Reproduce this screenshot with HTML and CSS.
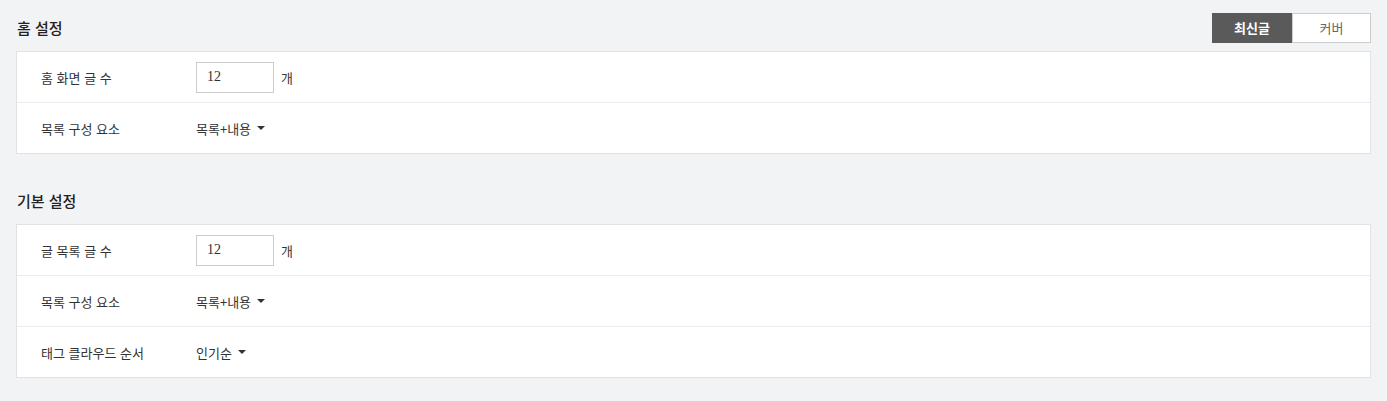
FILE: index.html
```html
<!DOCTYPE html>
<html lang="ko">
<head>
<meta charset="utf-8">
<link rel="stylesheet" href="styles.css">
</head>
<body>
<section class="section">
  <div class="section-head">
    <h2 class="section-title">홈 설정</h2>
    <div class="toggle">
      <button class="toggle-btn active">최신글</button>
      <button class="toggle-btn">커버</button>
    </div>
  </div>
  <div class="card">
    <div class="row">
      <div class="label">홈 화면 글 수</div>
      <div class="value"><span class="input">12</span><span class="unit">개</span></div>
    </div>
    <div class="row">
      <div class="label">목록 구성 요소</div>
      <div class="value"><span class="select">목록+내용<span class="caret"></span></span></div>
    </div>
  </div>
</section>
<section class="section second">
  <div class="section-head">
    <h2 class="section-title">기본 설정</h2>
  </div>
  <div class="card">
    <div class="row">
      <div class="label">글 목록 글 수</div>
      <div class="value"><span class="input">12</span><span class="unit">개</span></div>
    </div>
    <div class="row">
      <div class="label">목록 구성 요소</div>
      <div class="value"><span class="select">목록+내용<span class="caret"></span></span></div>
    </div>
    <div class="row">
      <div class="label">태그 클라우드 순서</div>
      <div class="value"><span class="select">인기순<span class="caret"></span></span></div>
    </div>
  </div>
</section>
</body>
</html>
```
FILE: styles.css
```css
* { box-sizing: border-box; }
html, body { margin: 0; }
body {
  background: #f2f3f5;
  padding: 13px 16px 0 16px;
  font-family: "Noto Sans CJK KR", "Noto Sans", sans-serif;
  font-size: 13px;
  color: #333;
}
.section.second { margin-top: 32px; }
.section-head {
  display: flex;
  align-items: center;
  justify-content: space-between;
  height: 29px;
  margin-bottom: 9px;
}
.section-title {
  margin: 0;
  font-size: 15px;
  font-weight: 500;
  color: #222;
  padding-left: 1px;
}
.toggle { display: flex; }
.toggle-btn {
  font-family: inherit;
  font-size: 13px;
  width: 79px;
  height: 30px;
  border: 1px solid #ccc;
  background: #fff;
  color: #666;
  padding: 0;
  margin: 0;
}
.toggle-btn.active {
  width: 80px;
  background: #5a5a5a;
  border-color: #5a5a5a;
  color: #fff;
  font-weight: 700;
}
.card {
  background: #fff;
  border: 1px solid #e0e2e5;
}
.row {
  display: flex;
  align-items: center;
  height: 51px;
  border-top: 1px solid #ececec;
}
.row:first-child { border-top: 0; height: 50px; }
.label {
  width: 179px;
  padding-left: 24px;
  color: #333;
}
.value { display: flex; align-items: center; }
.input {
  display: inline-flex;
  align-items: center;
  width: 78px;
  height: 31px;
  border: 1px solid #ccc;
  padding-left: 10px;
  font-family: "Liberation Serif", serif;
  font-size: 14px;
  color: #333;
}
.unit { margin-left: 7px; }
.select { display: inline-flex; align-items: center; }
.caret {
  display: inline-block;
  margin-left: 6px;
  width: 0; height: 0;
  border-left: 4px solid transparent;
  border-right: 4px solid transparent;
  border-top: 4px solid #333;
}
```
